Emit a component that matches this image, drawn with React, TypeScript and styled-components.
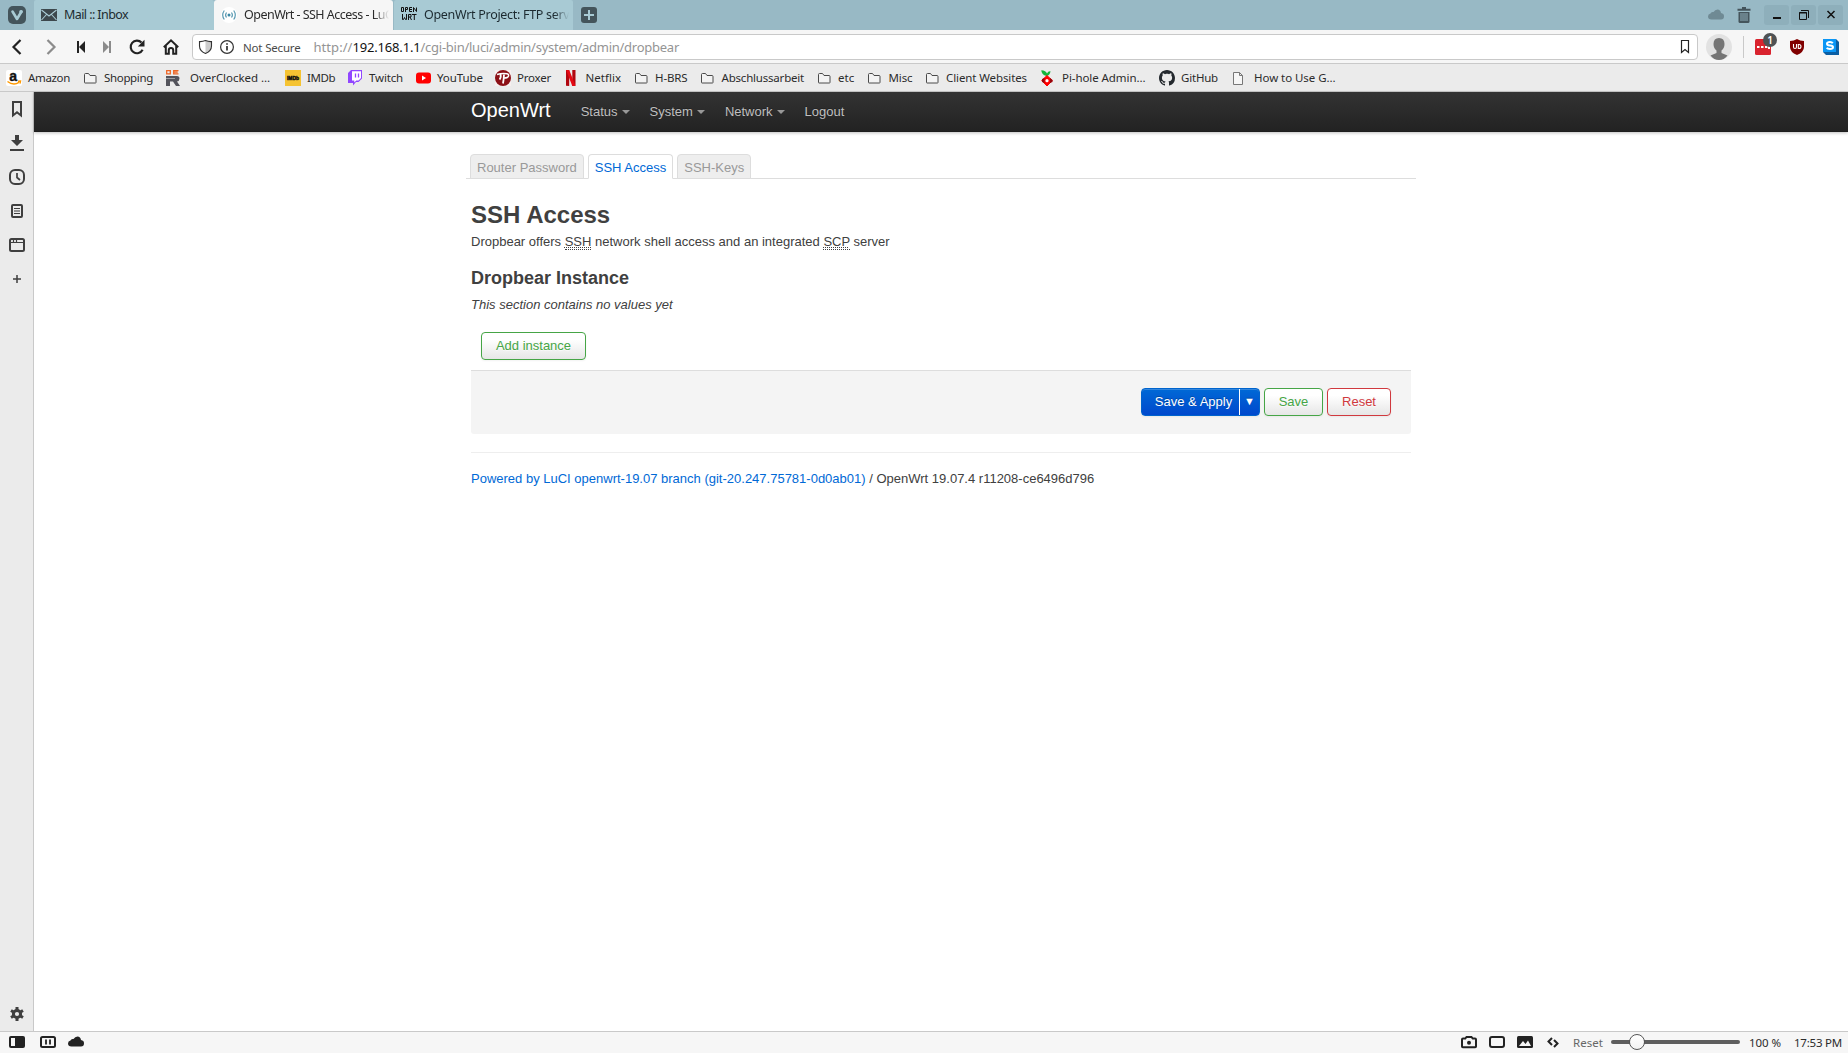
import React, { useLayoutEffect, useRef } from "react";
import styled, { createGlobalStyle, css } from "styled-components";

const UI = `"Noto Sans", "Open Sans", sans-serif`;
const PAGE = `"Liberation Sans", Arial, sans-serif`;

const Global = createGlobalStyle`
  * { box-sizing: border-box; }
  html, body { margin: 0; padding: 0; height: 100%; overflow: hidden; background: #fff; }
  body { font-family: ${UI}; }
`;

const Window = styled.div`
  display: grid;
  grid-template-rows: 30px 34px 28px 1fr 22px;
  width: 1848px;
  height: 1053px;
  color: #2b2b2b;
`;

/* ---------- fitted labels ---------- */

const LabelBox = styled.span<{ $w: number; $size: number; $color?: string }>`
  display: block;
  flex: none;
  width: ${(p) => p.$w}px;
  font-size: ${(p) => p.$size}px;
  color: ${(p) => p.$color ?? "inherit"};
  white-space: nowrap;
`;

/* Spreads its text over an exact width by adjusting the tracking. */
function Label({ w, size = 11.5, color, children }: { w: number; size?: number; color?: string; children: React.ReactNode }) {
  const inner = useRef<HTMLSpanElement>(null);
  useLayoutEffect(() => {
    const el = inner.current;
    if (!el) return;
    el.style.letterSpacing = "0px";
    const n = (el.textContent ?? "").length;
    el.style.letterSpacing = `${(w - el.getBoundingClientRect().width) / n}px`;
  }, [w]);
  return (
    <LabelBox $w={w} $size={size} $color={color}>
      <span ref={inner}>{children}</span>
    </LabelBox>
  );
}

const Svg = styled.svg`
  display: block;
  flex: none;
  overflow: visible;
`;

function Icon({ w = 16, h = 16, children }: { w?: number; h?: number; children: React.ReactNode }) {
  return (
    <Svg width={w} height={h} viewBox={`0 0 ${w} ${h}`} fill="none">
      {children}
    </Svg>
  );
}

/* ---------- tab strip ---------- */

const TabStrip = styled.div`
  display: flex;
  background: #98b9c5;
`;

const MenuCell = styled.div`
  width: 34px;
  padding: 6px 0 0 8px;
`;

const BrowserTab = styled.div<{ $active?: boolean; $w: number }>`
  display: flex;
  align-items: center;
  gap: 7px;
  width: ${(p) => p.$w}px;
  padding-left: 7px;
  overflow: hidden;
  color: #1c2a30;
  background: #a8cad4;
  border-radius: 2px 2px 0 0;
  ${(p) => p.$active && css`
    background: #f6f6f6;
    color: #2b2b2b;
    margin: 0 1px 0 0;
    border-radius: 3px 3px 0 0;
  `}
`;

const TabText = styled.div<{ $fade?: boolean }>`
  flex: 1;
  overflow: hidden;
  margin-right: 4px;
  padding-bottom: 1px;
  ${(p) => p.$fade && css`
    mask-image: linear-gradient(90deg, #000 calc(100% - 15px), transparent);
  `}
`;

const NewTab = styled.div`
  padding: 7px 0 0 8px;
`;

const WindowTools = styled.div`
  display: flex;
  align-items: flex-start;
  margin-left: auto;
  padding: 5px 5px 0 0;
`;

const WindowButton = styled.div`
  width: 25px;
  height: 20px;
  margin-left: 2px;
  border-radius: 3px;
  background: #8eafbb;
`;

const ToolSlot = styled.div<{ $w: number; $top?: number }>`
  width: ${(p) => p.$w}px;
  padding-top: ${(p) => p.$top ?? 0}px;
`;

/* ---------- address toolbar ---------- */

const Toolbar = styled.div`
  display: flex;
  align-items: center;
  background: #f6f6f6;
  border-bottom: 1px solid #c9c9c9;
  padding-top: 1px;
`;

const NavButtons = styled.div`
  display: grid;
  grid-template-columns: 33px 36px 24px 28px 32px 36px;
  width: 192px;
  justify-items: center;
`;

const AddressField = styled.div`
  display: flex;
  align-items: center;
  width: 1506px;
  height: 26px;
  padding: 0 8px 0 6px;
  background: #fff;
  border: 1px solid #c9c9c9;
  border-radius: 4px;
`;

const Gap = styled.div<{ $w: number }>`
  flex: none;
  width: ${(p) => p.$w}px;
`;

const Push = styled.div`
  margin-left: auto;
`;

const Divider = styled.div`
  width: 1px;
  height: 22px;
  margin: 0 11px 0 11px;
  background: #c9c9c9;
`;

const BadgeHost = styled.div`
  position: relative;
  width: 16px;
  height: 16px;
`;

const Count = styled.span`
  position: absolute;
  left: 8px;
  top: -6px;
  width: 14px;
  height: 14px;
  border-radius: 50%;
  background: #4f5254;
  color: #fff;
  font: 600 10px/14px ${UI};
  text-align: center;
`;

/* ---------- bookmark bar ---------- */

const BookmarkBar = styled.div`
  display: flex;
  align-items: center;
  padding-left: 6px;
  background: #ebebeb;
  border-bottom: 1px solid #c9c9c9;
`;

const Bookmark = styled.div<{ $w: number }>`
  display: flex;
  align-items: center;
  flex: none;
  width: ${(p) => p.$w}px;
`;

const BookmarkIcon = styled.div<{ $w: number }>`
  flex: none;
  width: ${(p) => p.$w}px;
`;

/* ---------- body ---------- */

const Body = styled.div`
  display: grid;
  grid-template-columns: 34px 1fr;
  min-height: 0;
`;

const SidePanel = styled.div`
  display: flex;
  flex-direction: column;
  background: #ebebeb;
  border-right: 1px solid #c9c9c9;
`;

const PanelButton = styled.div<{ $bottom?: boolean }>`
  display: flex;
  align-items: center;
  justify-content: center;
  height: 34px;
  padding-left: 1px;
  ${(p) => p.$bottom && css`margin-top: auto;`}
`;

const Page = styled.main`
  font: 13px/18px ${PAGE};
  color: #404040;
  background: #fff;
`;

const TopBar = styled.header`
  height: 40px;
  background: linear-gradient(#333, #222);
  box-shadow: 0 1px 3px rgba(0, 0, 0, 0.25), inset 0 -1px 0 rgba(0, 0, 0, 0.1);
`;

const Container = styled.div`
  width: 940px;
  margin: 0 auto;
`;

const TopNav = styled(Container)`
  display: flex;
`;

const Brand = styled.a`
  padding: 8px 20px 12px 0;
  font-size: 20px;
  line-height: 20px;
  color: #fff;
`;

const NavLink = styled.a`
  display: flex;
  align-items: center;
  height: 40px;
  padding: 0 10px 1px;
  color: #bfbfbf;
  text-shadow: 0 -1px 0 rgba(0, 0, 0, 0.25);
`;

const Caret = styled.span`
  margin: 1px 0 0 4px;
  border: 4px solid transparent;
  border-top-color: #989898;
  border-bottom: 0;
`;

const TabRow = styled.nav`
  display: flex;
  align-items: flex-end;
  gap: 4px;
  height: 25px;
  margin: 22px -5px 0;
  padding-left: 4px;
  border-bottom: 1px solid #ddd;
`;

const PageTab = styled.a<{ $active?: boolean }>`
  height: 25px;
  margin-bottom: -1px;
  padding: 4px 6px 0;
  border: 1px solid #ddd;
  border-radius: 4px 4px 0 0;
  background: #eee;
  color: #999;
  ${(p) => p.$active && css`
    background: #fff;
    border-bottom-color: #fff;
    color: #0069d6;
  `}
`;

const Title = styled.h2`
  margin: 18px 0 0;
  font-size: 24px;
  line-height: 36px;
`;

const Description = styled.div`
  margin-bottom: 9px;
`;

const Abbr = styled.abbr`
  border-bottom: 1px dotted #404040;
  text-decoration: underline dotted #404040 1px;
  text-underline-offset: 1px;
`;

const Section = styled.h3`
  margin: 0;
  font-size: 18px;
  line-height: 36px;
`;

const Button = styled.button<{ $tone: string; $w: number }>`
  width: ${(p) => p.$w}px;
  height: 28px;
  padding: 0;
  font: 13px/18px ${PAGE};
  color: ${(p) => p.$tone};
  background: linear-gradient(#fff, #fff 25%, #e6e6e6);
  border: 1px solid ${(p) => p.$tone};
  border-radius: 4px;
  text-shadow: 0 1px 1px rgba(255, 255, 255, 0.75);
  box-shadow: inset 0 1px 0 rgba(255, 255, 255, 0.2), 0 1px 2px rgba(0, 0, 0, 0.05);
`;

const Create = styled.div`
  padding: 18px 0 10px 10px;
  display: flex;
`;

const Actions = styled.div`
  display: flex;
  justify-content: flex-end;
  gap: 4px;
  height: 64px;
  padding: 17px 20px 0;
  background: #f4f4f4;
  border-top: 1px solid #ddd;
  border-radius: 0 0 3px 3px;
`;

const SplitButton = styled.div`
  display: grid;
  grid-template-columns: 97px 1px 19px;
  width: 119px;
  height: 28px;
  border: 1px solid #0064cd;
  border-radius: 4px;
  background: linear-gradient(#0069d6, #0048cd);
  box-shadow: inset 0 1px 0 rgba(255, 255, 255, 0.2), 0 1px 2px rgba(0, 0, 0, 0.05);
  color: #fff;
  line-height: 25px;
  text-align: center;
  text-shadow: 0 -1px 0 rgba(0, 0, 0, 0.25);
`;

const SplitLabel = styled.span`
  padding-left: 6px;
`;

const SplitLine = styled.span`
  background: #fff;
`;

const SplitArrow = styled.span`
  font-size: 11px;
`;

const Footer = styled.footer`
  margin-top: 18px;
  padding-top: 17px;
  border-top: 1px solid #eee;
`;

const Link = styled.a`
  color: #0069d6;
`;

/* ---------- status bar ---------- */

const StatusBar = styled.div`
  display: flex;
  align-items: center;
  padding-bottom: 1px;
  background: #f6f6f6;
  border-top: 1px solid #c9c9c9;
`;

const Track = styled.div`
  display: flex;
  align-items: center;
  width: 129px;
  height: 4px;
  padding-left: 18px;
  border-radius: 2px;
  background: #5e5e5e;
`;

const Knob = styled.div`
  width: 16px;
  height: 16px;
  border: 1px solid #555;
  border-radius: 50%;
  background: linear-gradient(#fff, #f3f3f3);
`;

const K = "#222";

const Folder = () => (
  <Icon>
    <path d="M2.5 12.5v-8q0-1 1-1h3l1.500 2h5q1 0 1 1v6q0 .5-.5.5h-10.500q-.5 0-.5-.5z" stroke="#4a4a4a" fill="#f3f3f3" />
  </Icon>
);

const OverclockedIcon = () => (
  <Icon>
    <path d="M1.700.7h3.600v3.100H1.700zM13.500.7H8.700v3.100h4.800M8.700 2.200h4" stroke="#ee6524" strokeWidth="1.300" />
    <path d="M1 6h11q2.500 0 2.500 2.500T12 11.500l3 4.500h-4l-3-4.500H5V16H1v-7h9V8.500H1z" fill="#54545c" />
  </Icon>
);

const AmazonIcon = () => (
  <Icon>
    <rect width="16" height="16" rx="2" fill="#fff" />
    <text x="3.300" y="10.500" fontFamily="Liberation Sans, sans-serif" fontWeight="700" fontSize="14" fill="#111" stroke="#111" strokeWidth=".4">a</text>
    <path d="M1.500 11.500q6 4.500 11.500.8M12 11.200l2.500-.2-.5 2.500" stroke="#f90" strokeWidth="1.400" />
  </Icon>
);

const ImdbIcon = () => (
  <Icon>
    <rect width="16" height="16" fill="#f5c332" />
    <text x="2" y="10" textLength="12" lengthAdjust="spacingAndGlyphs" fontFamily="Liberation Sans, sans-serif" fontWeight="700" fontSize="5.500" fill="#111" stroke="#111" strokeWidth=".5">IMDb</text>
  </Icon>
);

const TwitchIcon = () => (
  <Icon>
    <path d="M4 0h11v8.500L11.500 12H9l-3 3.500V13H1V3z" fill="#9146ff" />
    <path d="M5 1.200h9V8l-2.500 2.500H9.300L7.300 12.500v-2H5z" fill="#fff" />
    <path d="M8.500 3.500v4M11.500 3.500v4" stroke="#9146ff" strokeWidth="1.300" />
  </Icon>
);

const YoutubeIcon = () => (
  <Icon>
    <rect x="0" y="2.500" width="15" height="11" rx="3" fill="#f00" />
    <path d="M6 5.500v5l4-2.500z" fill="#fff" />
  </Icon>
);

const ProxerIcon = () => (
  <Icon>
    <rect width="16" height="16" fill="#f7f0f0" />
    <circle cx="8" cy="8" r="8" fill="#8c1016" />
    <path d="M2 4.500q4.500-1.500 10-.8 2 .5 1.500 2.300-.5 2-4.500 2" stroke="#fff" strokeWidth="1.500" />
    <path d="M5.500 4q.8 4-1 5.500M9 4.500q-.2 5-1 9" stroke="#fff" strokeWidth="1.800" />
  </Icon>
);

const NetflixIcon = () => (
  <Icon>
    <path d="M3 0h3.200v16L3 15.700zM9.300 0h3.200v15.700L9.300 16z" fill="#b1060f" />
    <path d="M3 0h3.200l6.300 15.800-3.200.2z" fill="#e50914" />
  </Icon>
);

const PiholeIcon = () => (
  <Icon>
    <path d="M7.500 6Q2.500 5 2.300.2 7 .5 8 3.500 9 1 11.500 1.300 11 5.500 7.500 6z" fill="#14b53a" />
    <path d="M8 5.500l5.300 5L8 16l-5.300-5.500z" fill="#f00" stroke="#f00" strokeLinejoin="round" />
    <path d="M3 9l2.500-1v5L3 12zM11 8l2.500 2v2L11 13z" fill="#96060c" />
    <circle cx="8" cy="10.700" r="1.600" fill="#fff" />
  </Icon>
);

const GithubIcon = () => (
  <Icon>
    <path fill="#24292e" d="M8 0C3.580 0 0 3.580 0 8c0 3.540 2.290 6.530 5.470 7.590.4.070.55-.17.55-.38 0-.19-.01-.82-.01-1.490-2.010.37-2.530-.49-2.690-.94-.09-.23-.48-.94-.82-1.130-.28-.15-.68-.52-.01-.53.63-.01 1.080.58 1.230.82.72 1.210 1.870.87 2.330.66.07-.52.28-.87.51-1.070-1.780-.2-3.640-.89-3.640-3.950 0-.87.31-1.590.82-2.150-.08-.2-.36-1.020.08-2.120 0 0 .67-.21 2.200.82.64-.18 1.320-.27 2-.27s1.360.09 2 .27c1.530-1.040 2.200-.82 2.200-.82.44 1.100.16 1.920.08 2.120.51.56.82 1.270.82 2.150 0 3.070-1.870 3.750-3.650 3.950.29.25.54.73.54 1.480 0 1.070-.01 1.930-.01 2.200 0 .21.15.46.55.38A8.010 8.010 0 0 0 16 8c0-4.420-3.580-8-8-8z" />
  </Icon>
);

const FileIcon = () => (
  <Icon>
    <path d="M2.500 2.500h6l3 3v9h-9zM8.500 2.500v3h3" stroke="#777" fill="#f6f6f6" />
  </Icon>
);

type Mark = { x: number; tx: number; end: number; text: string; icon: React.ReactNode };

const MARKS: Mark[] = [
  { x: 6, tx: 28, end: 70, text: "Amazon", icon: <AmazonIcon /> },
  { x: 82, tx: 104, end: 153, text: "Shopping", icon: <Folder /> },
  { x: 165, tx: 190, end: 270, text: "OverClocked …", icon: <OverclockedIcon /> },
  { x: 285, tx: 307, end: 335, text: "IMDb", icon: <ImdbIcon /> },
  { x: 347, tx: 369, end: 403, text: "Twitch", icon: <TwitchIcon /> },
  { x: 415.500, tx: 437, end: 483, text: "YouTube", icon: <YoutubeIcon /> },
  { x: 495, tx: 517, end: 551, text: "Proxer", icon: <ProxerIcon /> },
  { x: 563, tx: 585.500, end: 621, text: "Netflix", icon: <NetflixIcon /> },
  { x: 633, tx: 655, end: 687.500, text: "H-BRS", icon: <Folder /> },
  { x: 699, tx: 721.500, end: 804, text: "Abschlussarbeit", icon: <Folder /> },
  { x: 816, tx: 838, end: 854.500, text: "etc", icon: <Folder /> },
  { x: 866, tx: 888.500, end: 912.500, text: "Misc", icon: <Folder /> },
  { x: 924, tx: 946, end: 1027, text: "Client Websites", icon: <Folder /> },
  { x: 1039, tx: 1062, end: 1145.500, text: "Pi-hole Admin…", icon: <PiholeIcon /> },
  { x: 1159, tx: 1181, end: 1218, text: "GitHub", icon: <GithubIcon /> },
  { x: 1231, tx: 1254, end: 1335.500, text: "How to Use G…", icon: <FileIcon /> },
];

const CloudShape = ({ fill }: { fill: string }) => (
  <path d="M3.500 12.500Q0 12.500 0 9.500 0 7 2.500 6.500 3 4.500 5.500 5 7 2.500 9.500 2.500q3 0 3.500 3.500 3 .5 3 3.300 0 3.200-3 3.200z" fill={fill} />
);

function Tabs() {
  return (
    <TabStrip>
      <MenuCell>
        <Icon w={18} h={18}>
          <rect width="18" height="18" rx="5" fill="#44545b" />
          <path d="M4.500 5.500L9 13l4.500-7.500" stroke="#a8cad4" strokeWidth="2.600" strokeLinecap="round" strokeLinejoin="round" />
          <circle cx="13" cy="5.800" r="1.800" fill="#a8cad4" />
        </Icon>
      </MenuCell>
      <BrowserTab $w={180}>
        <Icon>
          <rect y="2" width="16" height="12" fill="#3d484d" />
          <path d="M.5 3L8 9l7.500-6M.5 13l5-5.500M15.500 13l-5-5.500" stroke="#a8cad4" strokeWidth="1.100" />
        </Icon>
        <TabText><Label w={64} size={12.500}>Mail :: Inbox</Label></TabText>
      </BrowserTab>
      <BrowserTab $w={179} $active>
        <Icon>
          <circle cx="8" cy="8" r="8" fill="#fff" />
          <circle cx="8" cy="8" r="1.500" fill="#3a87a5" />
          <path d="M5.500 5.500q-1.800 2.500 0 5M10.500 5.500q1.800 2.500 0 5M3.300 3.500q-3.200 4.500 0 9M12.700 3.500q3.200 4.500 0 9" stroke="#5a9ab2" strokeWidth="1.200" />
        </Icon>
        <TabText $fade><Label w={152} size={12.500}>OpenWrt - SSH Access - LuCI</Label></TabText>
      </BrowserTab>
      <BrowserTab $w={179}>
        <Icon>
          <path d="M.5.5h2v4h-2zM4.500 5V.5h2v2h-2M11 .5H8.500v4H11M8.500 2.500H11M12.500 5V.5l3 4V.5M1.500 7v5.500h1l1-2 1 2h1V7M7.500 13V7.500h2.500V10H7.500M9 10l1.500 3M11 7.500h4.500M13.300 7.500V13" stroke="#111" />
        </Icon>
        <TabText $fade><Label w={157} size={12.500}>OpenWrt Project: FTP server</Label></TabText>
      </BrowserTab>
      <NewTab>
        <Icon>
          <rect width="16" height="16" rx="3" fill="#44545b" />
          <path d="M8 3v10M3 8h10" stroke="#a8cad4" strokeWidth="2" />
        </Icon>
      </NewTab>
      <WindowTools>
        <ToolSlot $w={29} $top={2}><Icon><CloudShape fill="#6f8a94" /></Icon></ToolSlot>
        <ToolSlot $w={25} $top={2}>
          <Icon w={14} h={16}>
            <path d="M5 1h4M.5 2.800h13" stroke="#44545b" strokeWidth="2" />
            <path d="M1.500 5h11v9.500q0 1.500-1.500 1.500H3q-1.500 0-1.500-1.500z" fill="#44545b" />
            <path d="M4 6v8M6 6v8M8 6v8M10 6v8" stroke="#98b9c5" strokeWidth=".9" />
          </Icon>
        </ToolSlot>
        <WindowButton><Icon w={25} h={20}><path d="M9 13h8" stroke="#111" strokeWidth="2" /></Icon></WindowButton>
        <WindowButton>
          <Icon w={25} h={20}>
            <path d="M8.500 7.500h7v7h-7zM8 8h8M10 5.500h7.500V13" stroke="#111" />
          </Icon>
        </WindowButton>
        <WindowButton><Icon w={25} h={20}><path d="M9.500 6l7 7M16.500 6l-7 7" stroke="#111" strokeWidth="1.500" /></Icon></WindowButton>
      </WindowTools>
    </TabStrip>
  );
}

const Rewind = ({ color, flip }: { color: string; flip?: boolean }) => (
  <Icon>
    <g transform={flip ? "translate(16 0) scale(-1 1)" : undefined}>
      <path d="M4 2h2v12H4z" fill={color} />
      <path d="M12 2v12L6 8z" fill={color} />
    </g>
  </Icon>
);

function AddressBar() {
  return (
    <Toolbar>
      <NavButtons>
        <Icon><path d="M11.500 1L4.500 8l7 7" stroke={K} strokeWidth="2.200" /></Icon>
        <Icon><path d="M4.500 1l7 7-7 7" stroke="#8b8b8b" strokeWidth="2.200" /></Icon>
        <Rewind color={K} />
        <Rewind color="#8b8b8b" flip />
        <Icon>
          <path d="M13.600 10.800A6.300 6.300 0 1 1 12.500 3.500" stroke={K} strokeWidth="2.200" />
          <path d="M15.500.8v6.700H8.800z" fill={K} />
        </Icon>
        <Icon>
          <path d="M.8 8.200L8 1.300l7.200 6.900M2.800 7v7.800h3V11q0-2 2.200-2t2.200 2v3.800h3V7" stroke={K} strokeWidth="2" />
        </Icon>
      </NavButtons>
      <AddressField>
        <Icon w={13} h={14}>
          <path d="M6.500.5q3 1.200 6 1V6q0 5-6 7.500z" fill="#ccc" />
          <path d="M6.500.6q-3 1.200-6 1V6q0 5 6 7.500 6-2.500 6-7.500V1.600q-3 .2-6-1z" stroke="#333" strokeWidth="1.100" />
        </Icon>
        <Gap $w={8} />
        <Icon w={14} h={14}>
          <circle cx="7" cy="7" r="6.400" stroke="#333" strokeWidth="1.200" />
          <path d="M7 6v4.500M7 3.200v1.600" stroke="#222" strokeWidth="1.600" />
        </Icon>
        <Gap $w={9} />
        <Label w={57.5} size={11.500} color="#4a4a4a">Not Secure</Label>
        <Gap $w={13} />
        <Label w={39} size={13} color="#949494">http://</Label>
        <Label w={68} size={13} color="#111">192.168.1.1</Label>
        <Label w={258.5} size={13} color="#949494">/cgi-bin/luci/admin/system/admin/dropbear</Label>
        <Push>
          <Icon w={8} h={14}><path d="M.5.5h7v12L4 9.500.5 12.500z" stroke="#222" strokeWidth="1.200" /></Icon>
        </Push>
      </AddressField>
      <Gap $w={8} />
      <Icon w={26} h={26}>
        <circle cx="13" cy="13" r="13" fill="#e2e2e2" />
        <path d="M13 4q5.500 0 5.500 6 0 4-3 6.500V19l6 2.500Q18 26 13 26t-8.500-4.500l6-2.500v-2.500q-3-2.500-3-6.500 0-6 5.500-6z" fill="#757575" />
      </Icon>
      <Divider />
      <BadgeHost>
        <Icon>
          <rect width="16" height="16" rx="1.500" fill="#d9232e" />
          <path d="M2 8h2.500M6 8h2.500M10 8h2.500M14 7v3" stroke="#fff" strokeWidth="2" />
        </Icon>
        <Count>1</Count>
      </BadgeHost>
      <Gap $w={19} />
      <Icon w={14} h={16}>
        <path d="M7 0q3 2 7 2v6q0 5-7 8-7-3-7-8V2q4 0 7-2z" fill="#800000" />
        <path d="M3.500 5v3q0 1.500 1.500 1.500T6.500 8V5M8.300 5.500H9q2 0 2 2t-2 2h-.7z" stroke="#fff" strokeWidth="1.100" />
      </Icon>
      <Gap $w={19} />
      <Icon>
        <path d="M0 0h13l3 3v13H3l-3-3z" fill="#0b5ea3" />
        <path d="M0 0h13v13H0z" fill="#0a96f5" />
        <path d="M9.800 4.200Q9 3 7 3 4 3 4 4.700T7 6.500t3 1.800T7 10q-2.500 0-3.300-1.300" stroke="#fff" strokeWidth="2" />
      </Icon>
    </Toolbar>
  );
}

function Bookmarks() {
  return (
    <BookmarkBar>
      {MARKS.map((m, i) => (
        <Bookmark key={m.text} $w={(MARKS[i + 1]?.x ?? 1345) - m.x}>
          <BookmarkIcon $w={m.tx - m.x}>{m.icon}</BookmarkIcon>
          <Label w={m.end - m.tx}>{m.text}</Label>
        </Bookmark>
      ))}
    </BookmarkBar>
  );
}

const S = "#3f3f3f";

function Panels() {
  return (
    <SidePanel>
      <PanelButton>
        <Icon><path d="M4 1h8v13.500l-4-3.300-4 3.300z" stroke={S} strokeWidth="2" /></Icon>
      </PanelButton>
      <PanelButton>
        <Icon>
          <path d="M6 0h4v5h4L8 11 2 5h4z" fill={S} />
          <path d="M1 15h14" stroke={S} strokeWidth="2" />
        </Icon>
      </PanelButton>
      <PanelButton>
        <Icon>
          <rect x="1" y="1" width="14" height="14" rx="5" stroke={S} strokeWidth="2" />
          <path d="M8 4v4.500l3 2.500" stroke={S} strokeWidth="1.700" />
        </Icon>
      </PanelButton>
      <PanelButton>
        <Icon>
          <rect x="3" y="2" width="10" height="12" rx="1" stroke={S} strokeWidth="2" />
          <path d="M5 5.500h6M5 8h6M5 10.500h6" stroke={S} strokeWidth="1.100" />
        </Icon>
      </PanelButton>
      <PanelButton>
        <Icon>
          <rect x="1" y="2" width="14" height="12" rx="1.500" stroke={S} strokeWidth="2" />
          <path d="M1 5.500h14M4.500 2v3M7.500 2v3" stroke={S} strokeWidth="1.200" />
        </Icon>
      </PanelButton>
      <PanelButton>
        <Icon><path d="M8 4v8M4 8h8" stroke={S} strokeWidth="1.500" /></Icon>
      </PanelButton>
      <PanelButton $bottom>
        <Icon>
          <circle cx="8" cy="8" r="3.600" stroke={S} strokeWidth="3" />
          <path d="M8 1v3M8 12v3M2 4.500L4.500 6M11.500 10l2.500 1.500M2 11.500L4.500 10M11.500 6L14 4.500" stroke={S} strokeWidth="3" />
        </Icon>
      </PanelButton>
    </SidePanel>
  );
}

function LuciPage() {
  return (
    <Page>
      <TopBar>
        <TopNav>
          <Brand>OpenWrt</Brand>
          <NavLink>Status<Caret /></NavLink>
          <NavLink>System<Caret /></NavLink>
          <NavLink>Network<Caret /></NavLink>
          <NavLink>Logout</NavLink>
        </TopNav>
      </TopBar>
      <Container>
        <TabRow>
          <PageTab>Router Password</PageTab>
          <PageTab $active>SSH Access</PageTab>
          <PageTab>SSH-Keys</PageTab>
        </TabRow>
        <Title>SSH Access</Title>
        <Description>
          Dropbear offers <Abbr>SSH</Abbr> network shell access and an integrated <Abbr>SCP</Abbr> server
        </Description>
        <Section>Dropbear Instance</Section>
        <em>This section contains no values yet</em>
        <Create><Button $tone="#46a546" $w={105}>Add instance</Button></Create>
        <Actions>
          <SplitButton>
            <SplitLabel>Save &amp; Apply</SplitLabel>
            <SplitLine />
            <SplitArrow>▼</SplitArrow>
          </SplitButton>
          <Button $tone="#46a546" $w={59}>Save</Button>
          <Button $tone="#d0393e" $w={64}>Reset</Button>
        </Actions>
        <Footer>
          <Link>Powered by LuCI openwrt-19.07 branch (git-20.247.75781-0d0ab01)</Link> / OpenWrt 19.07.4 r11208-ce6496d796
        </Footer>
      </Container>
    </Page>
  );
}

function Status() {
  return (
    <StatusBar>
      <Gap $w={9} />
      <Icon w={16} h={12}>
        <rect width="16" height="12" rx="2" fill={K} />
        <path d="M2 2h4v8H2z" fill="#f6f6f6" />
      </Icon>
      <Gap $w={15} />
      <Icon w={16} h={12}>
        <rect x="1" y="1" width="14" height="10" rx="1.500" stroke={K} strokeWidth="2" />
        <path d="M6 3.500v5M10 3.500v5" stroke={K} strokeWidth="1.800" />
      </Icon>
      <Gap $w={12} />
      <Icon><CloudShape fill={K} /></Icon>
      <Gap $w={1377} />
      <Icon w={16} h={12}>
        <path d="M1 10.500V3.500q0-1 1-1h2.300L5.500 1h5l1.200 1.500H14q1 0 1 1v7q0 .7-.8.7H1.800q-.8 0-.8-.7z" stroke={K} strokeWidth="2" />
        <circle cx="8" cy="6.700" r="2" fill={K} />
      </Icon>
      <Gap $w={12} />
      <Icon w={16} h={12}><rect x="1" y="1" width="14" height="10" rx="2" stroke={K} strokeWidth="2" /></Icon>
      <Gap $w={12} />
      <Icon w={16} h={12}>
        <rect width="16" height="12" rx="1.500" fill={K} />
        <path d="M2 10l4-5 2.500 3L11 4.500l3 5.500z" fill="#f6f6f6" />
      </Icon>
      <Gap $w={14} />
      <Icon w={12} h={12}><path d="M5 2L1.500 5.500 5 9M7 4l3.500 3.500L7 11" stroke={K} strokeWidth="2" /></Icon>
      <Gap $w={14} />
      <Label w={30} color="#666">Reset</Label>
      <Gap $w={8} />
      <Track><Knob /></Track>
      <Gap $w={9} />
      <Label w={32}>100 %</Label>
      <Gap $w={13} />
      <Label w={48}>17:53 PM</Label>
    </StatusBar>
  );
}

export default function App() {
  return (
    <>
      <Global />
      <Window>
        <Tabs />
        <AddressBar />
        <Bookmarks />
        <Body>
          <Panels />
          <LuciPage />
        </Body>
        <Status />
      </Window>
    </>
  );
}
